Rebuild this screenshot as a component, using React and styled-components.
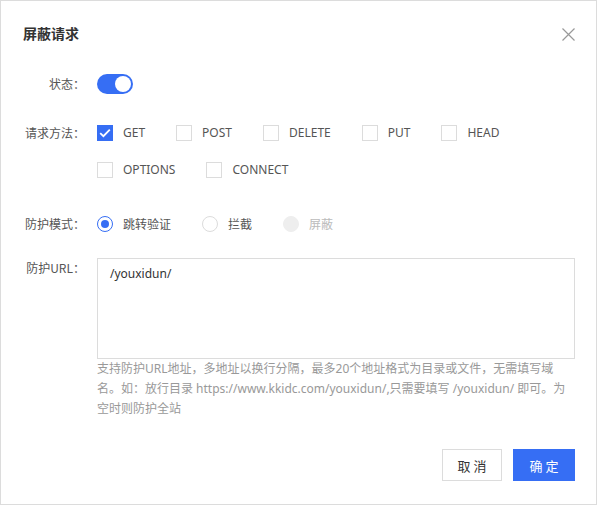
import { useState } from "react";
import styled, { createGlobalStyle } from "styled-components";

const BLUE = "#366ef4";

const GlobalStyle = createGlobalStyle`
  html, body {
    margin: 0;
    padding: 0;
    background: #fff;
  }
  body {
    font-family: "Noto Sans", "Noto Sans CJK SC", sans-serif;
    font-size: 12px;
    color: #555;
  }
  * {
    box-sizing: border-box;
  }
`;

const Dialog = styled.div`
  width: 597px;
  height: 505px;
  border: 1px solid #dcdcdc;
  background: #fff;
  padding: 22px 21px 0 22px;
  display: flex;
  flex-direction: column;
`;

const Header = styled.div`
  display: flex;
  align-items: center;
  justify-content: space-between;
  height: 20px;
`;

const Title = styled.h3`
  margin: 0;
  font-size: 14px;
  font-weight: bold;
  color: #333;
  line-height: 20px;
  font-family: "Noto Sans CJK SC", sans-serif;
`;

const CloseButton = styled.button`
  width: 14px;
  height: 14px;
  padding: 0;
  margin-top: 2px;
  border: none;
  background: transparent;
  cursor: pointer;
  display: flex;
  align-items: center;
  justify-content: center;
`;

const Form = styled.div`
  display: flex;
  flex-direction: column;
`;

const FormItem = styled.div`
  display: grid;
  grid-template-columns: 62px 1fr;
  column-gap: 12px;
  margin-top: ${(p) => p.$top}px;
`;

const Label = styled.label`
  text-align: right;
  line-height: 20px;
  color: #555;
  white-space: nowrap;
  font-family: "Noto Sans CJK SC", sans-serif;
`;

const SwitchTrack = styled.button`
  width: 36px;
  height: 20px;
  border-radius: 10px;
  border: none;
  padding: 2px;
  background: ${(p) => (p.$on ? BLUE : "#ccc")};
  display: flex;
  justify-content: ${(p) => (p.$on ? "flex-end" : "flex-start")};
  cursor: pointer;
`;

const SwitchKnob = styled.span`
  width: 16px;
  height: 16px;
  border-radius: 50%;
  background: #fff;
`;

const OptionGroup = styled.div`
  display: flex;
  flex-direction: column;
  gap: 17px;
`;

const OptionRow = styled.div`
  display: flex;
`;

const Option = styled.label`
  display: flex;
  align-items: center;
  height: 20px;
  margin-right: 31px;
  cursor: ${(p) => (p.$disabled ? "not-allowed" : "pointer")};
  color: ${(p) => (p.$disabled ? "#bbb" : "#555")};
  line-height: 20px;
`;

const Box = styled.span`
  width: 16px;
  height: 16px;
  margin-right: 10px;
  border: 1px solid ${(p) => (p.$checked ? BLUE : "#dcdcdc")};
  background: ${(p) => (p.$checked ? BLUE : "#fff")};
  display: flex;
  align-items: center;
  justify-content: center;
  flex-shrink: 0;
`;

const Radio = styled.span`
  width: 16px;
  height: 16px;
  margin-right: 10px;
  border-radius: 50%;
  border: 1px solid
    ${(p) => (p.$disabled ? "#eeeeee" : p.$checked ? BLUE : "#dcdcdc")};
  background: ${(p) => (p.$disabled ? "#eeeeee" : "#fff")};
  display: flex;
  align-items: center;
  justify-content: center;
  flex-shrink: 0;

  &::after {
    content: "";
    width: 8px;
    height: 8px;
    border-radius: 50%;
    background: ${BLUE};
    display: ${(p) => (p.$checked ? "block" : "none")};
  }
`;

const ChineseText = styled.span`
  font-family: "Noto Sans CJK SC", sans-serif;
  font-style: normal;
`;

const TextArea = styled.textarea`
  width: 478px;
  height: 101px;
  border: 1px solid #dcdcdc;
  padding: 5px 12px;
  resize: none;
  font-family: "Noto Sans", "Noto Sans CJK SC", sans-serif;
  font-size: 12px;
  line-height: 20px;
  color: #333;
  outline: none;
  display: block;
`;

const Help = styled.p`
  margin: 0;
  width: 478px;
  font-size: 12px;
  line-height: 20px;
  color: #999;
  font-family: "Noto Sans", "Noto Sans CJK SC", sans-serif;
`;

const Footer = styled.div`
  margin-top: auto;
  margin-bottom: 23px;
  display: flex;
  justify-content: flex-end;
  gap: 11px;
`;

const Button = styled.button`
  height: 32px;
  width: ${(p) => (p.$primary ? 62 : 60)}px;
  border: 1px solid ${(p) => (p.$primary ? BLUE : "#dcdcdc")};
  background: ${(p) => (p.$primary ? BLUE : "#fff")};
  color: ${(p) => (p.$primary ? "#fff" : "#333")};
  font-family: "Noto Sans CJK SC", sans-serif;
  font-size: 13px;
  letter-spacing: 3px;
  text-indent: 3px;
  cursor: pointer;
  padding: 0;
`;

const methodRows = [
  ["GET", "POST", "DELETE", "PUT", "HEAD"],
  ["OPTIONS", "CONNECT"],
];

const modes = [
  { key: "verify", label: "跳转验证" },
  { key: "block", label: "拦截" },
  { key: "shield", label: "屏蔽", disabled: true },
];

function Check() {
  return (
    <svg width="12" height="10" viewBox="0 0 12 10">
      <path
        d="M1.2 5.2 L4.4 8.2 L10.8 1.6"
        fill="none"
        stroke="#fff"
        strokeWidth="1.8"
      />
    </svg>
  );
}

export default function App() {
  const [enabled, setEnabled] = useState(true);
  const [checked, setChecked] = useState(["GET"]);
  const [mode, setMode] = useState("verify");

  const toggle = (m) =>
    setChecked((c) => (c.includes(m) ? c.filter((x) => x !== m) : [...c, m]));

  return (
    <>
      <GlobalStyle />
      <Dialog>
        <Header>
          <Title>屏蔽请求</Title>
          <CloseButton>
            <svg width="13" height="13" viewBox="0 0 13 13">
              <path
                d="M0.5 0.5 L12.5 12.5 M12.5 0.5 L0.5 12.5"
                stroke="#999"
                strokeWidth="1.2"
              />
            </svg>
          </CloseButton>
        </Header>

        <Form>
          <FormItem $top={31}>
            <Label>状态：</Label>
            <div>
              <SwitchTrack $on={enabled} onClick={() => setEnabled(!enabled)}>
                <SwitchKnob />
              </SwitchTrack>
            </div>
          </FormItem>

          <FormItem $top={29}>
            <Label>请求方法：</Label>
            <OptionGroup>
              {methodRows.map((row, i) => (
                <OptionRow key={i}>
                  {row.map((m) => (
                    <Option key={m} onClick={() => toggle(m)}>
                      <Box $checked={checked.includes(m)}>
                        {checked.includes(m) && <Check />}
                      </Box>
                      {m}
                    </Option>
                  ))}
                </OptionRow>
              ))}
            </OptionGroup>
          </FormItem>

          <FormItem $top={34}>
            <Label>防护模式：</Label>
            <OptionRow>
              {modes.map((m) => (
                <Option
                  key={m.key}
                  $disabled={m.disabled}
                  onClick={() => !m.disabled && setMode(m.key)}
                >
                  <Radio $checked={mode === m.key} $disabled={m.disabled} />
                  <ChineseText>{m.label}</ChineseText>
                </Option>
              ))}
            </OptionRow>
          </FormItem>

          <FormItem $top={24}>
            <Label>防护URL：</Label>
            <div>
              <TextArea defaultValue="/youxidun/" />
              <Help>
                支持防护URL地址，多地址以换行分隔，最多20个地址格式为目录或文件，无需填写域名。如：放行目录
                https://www.kkidc.com/youxidun/,只需要填写 /youxidun/
                即可。为空时则防护全站
              </Help>
            </div>
          </FormItem>
        </Form>

        <Footer>
          <Button>取消</Button>
          <Button $primary>确定</Button>
        </Footer>
      </Dialog>
    </>
  );
}
